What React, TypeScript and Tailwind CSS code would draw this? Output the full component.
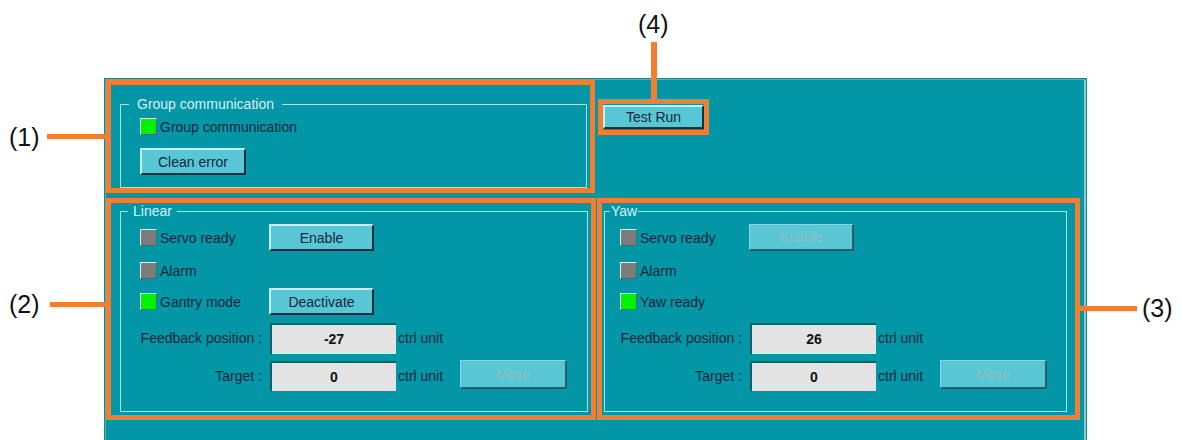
import clsx from "clsx";

const font = "font-['Liberation_Sans',Arial,sans-serif]";

function Led({ on }: { on: boolean }) {
    return (
        <span
            className={clsx(
                "inline-block w-[17px] h-[17px] shrink-0 border border-t-[#d9eff1] border-l-[#d9eff1] border-b-[#3f6a70] border-r-[#3f6a70]",
                on ? "bg-[#00f200]" : "bg-[#7c7c7c]"
            )}
        />
    );
}

function Button({ label, className, disabled }: { label: string; className: string; disabled?: boolean }) {
    return (
        <button
            className={clsx(
                "flex items-center justify-center bg-[#59c6d6] text-[14px] leading-none",
                disabled
                    ? "text-[#8fbfc8] border border-b-2 border-r-2 border-t-[#86d8e3] border-l-[#86d8e3] border-b-[#2a5c68] border-r-[#2a5c68]"
                    : "text-[#10283a] border-2 border-t-[#c4f0f5] border-l-[#c4f0f5] border-b-[#14303c] border-r-[#14303c]",
                className
            )}
        >
            {label}
        </button>
    );
}

function Field({ value }: { value: string }) {
    return (
        <div className="w-[126px] h-full flex items-center justify-center bg-[#e3e3e3] border-t-2 border-l-2 border-[#145c68] font-bold text-[14px] text-[#111]">
            {value}
        </div>
    );
}

function Axis({ title, third, feedback, enableOff, yaw }: { title: string; third: string; feedback: string; enableOff?: boolean; yaw?: boolean }) {
    return (
        <fieldset
            className={clsx(
                "h-[208px] mt-[1px] border border-[#a4e5eb] pt-[6px] flex flex-col",
                yaw ? "ml-[2px] mr-[8px] pl-[14px]" : "ml-[9px] mr-[3px] pl-[18px]"
            )}
        >
            <legend
                className={clsx(
                    "text-[14px] leading-[14px] text-[#d6f2f5]",
                    yaw ? "-ml-[9px] px-[1px]" : "-ml-[11px] px-[5px]"
                )}
            >
                {title}
            </legend>
            <div className="flex items-center h-[27px] pl-[1px]">
                <div className="flex items-center gap-[3px] w-[129px]">
                    <Led on={false} />
                    <span className="mt-[2px]">Servo ready</span>
                </div>
                <Button label="Enable" disabled={enableOff} className="w-[105px] h-[27px]" />
            </div>
            <div className="flex items-center h-[27px] mt-[6px] pl-[1px] gap-[3px]">
                <Led on={false} />
                <span className="mt-[2px]">Alarm</span>
            </div>
            <div className="flex items-center h-[27px] mt-[4px] pl-[1px]">
                <div className="flex items-center gap-[3px] w-[129px]">
                    <Led on={true} />
                    <span className="mt-[2px]">{third}</span>
                </div>
                {!yaw && <Button label="Deactivate" className="w-[105px] h-[27px]" />}
            </div>
            <div className="flex items-center h-[31px] mt-[8px]">
                <span className="w-[131px] pr-[8px] text-right">Feedback position :</span>
                <Field value={feedback} />
                <span className="pl-[2px]">ctrl unit</span>
            </div>
            <div className="flex items-center h-[30px] mt-[7px]">
                <span className="w-[131px] pr-[8px] text-right">Target :</span>
                <Field value="0" />
                <span className="w-[64px] pl-[2px]">ctrl unit</span>
                <Button label="Move" disabled className="w-[107px] h-[29px] -mt-[3px]" />
            </div>
        </fieldset>
    );
}

export default function App() {
    return (
        <div className={clsx("relative h-[440px] w-[1182px] overflow-hidden bg-white pt-[78px] pl-[104px] text-[14px] text-[#12263a]", font)}>
            {/* main panel */}
            <div className="w-[983px] h-[370px] bg-[#0296a6] border border-[#2c7c8a] shadow-[inset_1px_1px_0_#5aaebb,inset_-2px_0_0_#86cdd6] pt-[1px] pl-[1px]">
                <div className="flex items-start">
                    <div className="w-[489px] h-[113px] border-[5px] border-[#ee7f33] flex flex-col">
                        <fieldset className="h-[91px] mt-[12px] ml-[9px] mr-[3px] border border-[#a4e5eb] pl-[19px] pt-[7px] flex flex-col">
                            <legend className="-ml-[11px] px-[8px] text-[14px] leading-[14px] text-[#d6f2f5]">Group communication</legend>
                            <div className="flex items-center gap-[3px] h-[17px]">
                                <Led on={true} />
                                <span className="mt-[2px]">Group communication</span>
                            </div>
                            <Button label="Clean error" className="w-[106px] h-[27px] mt-[13px]" />
                        </fieldset>
                    </div>
                    <div className="ml-[3px] mt-[19px] w-[111px] h-[36px] border-[5px] border-[#ee7f33] pt-[1px]">
                        <Button label="Test Run" className="w-[101px] h-[24px]" />
                    </div>
                </div>
                <div className="flex mt-[5px] gap-[1px]">
                    <div className="w-[490px] h-[222px] border-[5px] border-[#ee7f33]">
                        <Axis title="Linear" third="Gantry mode" feedback="-27" />
                    </div>
                    <div className="w-[483px] h-[222px] border-[5px] border-[#ee7f33]">
                        <Axis title="Yaw" third="Yaw ready" feedback="26" enableOff yaw />
                    </div>
                </div>
            </div>

            {/* callouts */}
            <span className="absolute left-[9px] top-[123px] text-[25px] leading-[28px] text-[#111]">(1)</span>
            <div className="absolute left-[47px] top-[134px] w-[60px] h-[5px] bg-[#ee7f33]" />
            <span className="absolute left-[9px] top-[290px] text-[25px] leading-[28px] text-[#111]">(2)</span>
            <div className="absolute left-[50px] top-[302px] w-[57px] h-[5px] bg-[#ee7f33]" />
            <span className="absolute left-[1142px] top-[294px] text-[25px] leading-[28px] text-[#111]">(3)</span>
            <div className="absolute left-[1080px] top-[306px] w-[57px] h-[5px] bg-[#ee7f33]" />
            <span className="absolute left-[638px] top-[10px] text-[25px] leading-[28px] text-[#111]">(4)</span>
            <div className="absolute left-[651px] top-[42px] w-[6px] h-[58px] bg-[#ee7f33]" />
        </div>
    );
}
